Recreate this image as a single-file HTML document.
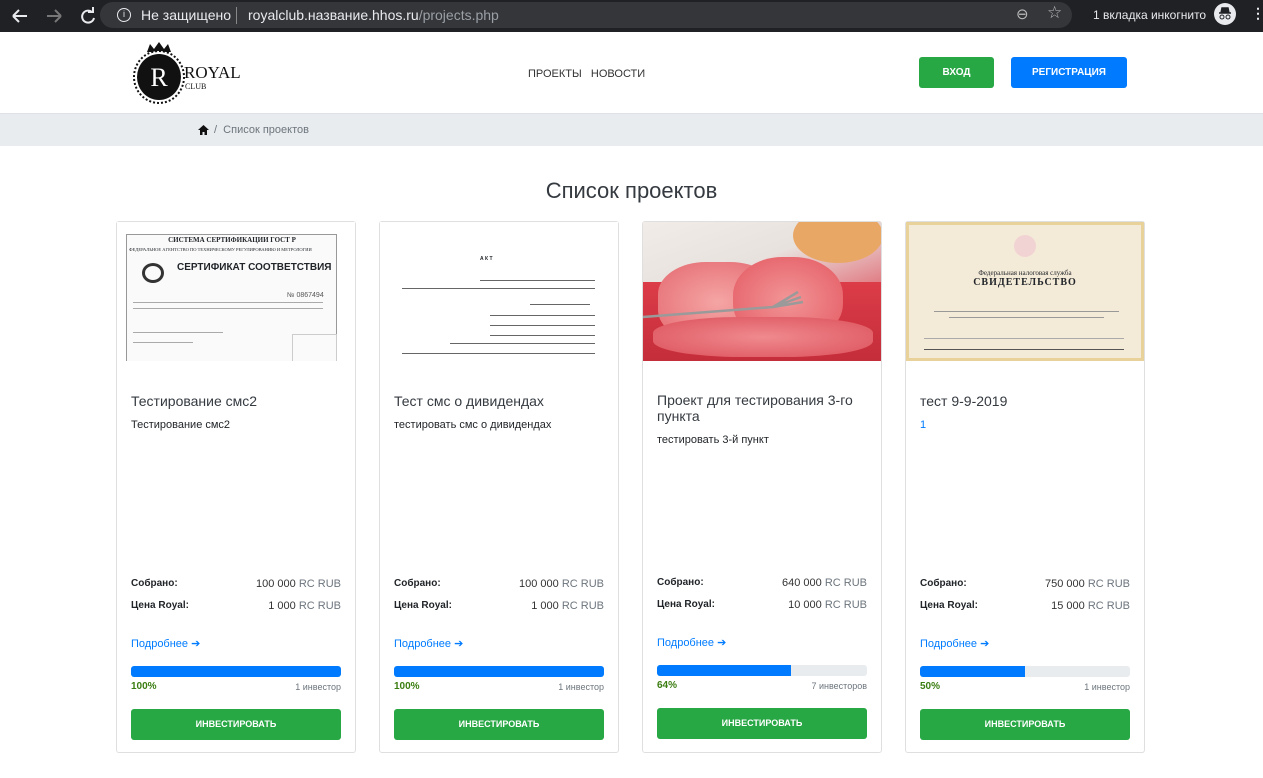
<!DOCTYPE html>
<html><head><meta charset="utf-8"><style>
*{margin:0;padding:0;box-sizing:border-box}
body{width:1263px;height:778px;overflow:hidden;background:#fff;font-family:"Liberation Sans",Arial,sans-serif;position:relative;color:#212529}
.abs{position:absolute}
#chrome{left:0;top:0;width:1263px;height:32px;background:#202124}
#omni{left:100px;top:2px;width:972px;height:26px;border-radius:13px;background:#35363a}
.ct{color:#e8eaed;font-size:14px;top:7px}
#hdr{left:0;top:32px;width:1263px;height:82px;background:#fff;border-bottom:1px solid #dee2e6}
#bc{left:0;top:114px;width:1263px;height:32px;background:#e9ecef}
.btn{color:#fff;font-size:10px;font-weight:bold;text-align:center;border-radius:3px}
.card{width:240px;height:532px;top:221px;border:1px solid #dfdfdf;border-radius:3px;background:#fff}
.card .img{position:absolute;left:0;top:0;width:238px;height:139px;overflow:hidden}
.t{position:absolute;left:14px;font-size:14px;color:#343a40;line-height:16px;width:215px}
.d{position:absolute;left:14px;font-size:11px;color:#212529}
.lab{position:absolute;left:14px;font-size:10px;font-weight:bold}
.val{position:absolute;right:14px;font-size:11px;color:#333}
.val span{color:#6c757d}
.more{position:absolute;left:14px;font-size:11px;color:#007bff}
.bar{position:absolute;left:14px;width:210px;height:11px;border-radius:3px;background:#e9ecef;overflow:hidden}
.bar i{display:block;height:100%;background:#007bff}
.pct{position:absolute;left:14px;font-size:10px;font-weight:bold;color:#3a7d10}
.inv{position:absolute;right:14px;font-size:9px;color:#6c757d}
.ib{position:absolute;left:14px;width:210px;height:31px;border-radius:3px;background:#28a745;color:#fff;font-size:9px;font-weight:bold;text-align:center;line-height:31px}
.line{position:absolute;height:1px;background:#666}
</style></head><body>
<div id="chrome" class="abs"></div>
<svg class="abs" style="left:10px;top:6px" width="90" height="20"><g stroke="#e8eaed" stroke-width="2" fill="none"><path d="M3 10 H17 M3 10 L9 4 M3 10 L9 16"/><path d="M51 10 H37 M51 10 L45 4 M51 10 L45 16" stroke="#777"/><path d="M82 6 A6 6 0 1 0 84 12"/><path d="M78 6 H83 V1" /></g></svg>
<div id="omni" class="abs"></div>
<div class="abs" style="left:117px;top:8px;width:14px;height:14px;border:1.5px solid #e8eaed;border-radius:50%;color:#e8eaed;font-size:9px;text-align:center;line-height:11px">i</div>
<div class="abs ct" style="left:141px">Не защищено</div>
<div class="abs" style="left:236px;top:7px;width:1px;height:17px;background:#888"></div>
<div class="abs ct" style="left:248px">royalclub.название.hhos.ru<span style="color:#9aa0a6">/projects.php</span></div>
<div class="abs ct" style="left:1016px;top:5px;font-size:15px;color:#bbb">⊖</div>
<div class="abs ct" style="left:1047px;top:3px;font-size:17px;color:#bbb">☆</div>
<div class="abs ct" style="left:1093px;top:8px;font-size:12px">1 вкладка инкогнито</div>
<svg class="abs" style="left:1214px;top:3px" width="22" height="22"><circle cx="11" cy="11" r="11" fill="#e8eaed"/><path d="M5 10 H17 M7 10 L8 5 H14 L15 10" stroke="#202124" stroke-width="1.5" fill="#202124"/><circle cx="8" cy="14" r="2" stroke="#202124" fill="none"/><circle cx="14" cy="14" r="2" stroke="#202124" fill="none"/></svg>
<div class="abs ct" style="left:1251px;top:5px;font-size:14px;font-weight:bold">⋮</div>

<div id="hdr" class="abs"></div>
<svg class="abs" style="left:130px;top:40px" width="120" height="66">
<path d="M17 12 L20 4 L24 9 L29 2 L34 9 L38 4 L41 12 Z" fill="#111"/>
<ellipse cx="29" cy="37" rx="25" ry="26" fill="#fff" stroke="#111" stroke-width="2" stroke-dasharray="2 2"/>
<ellipse cx="29" cy="37" rx="22" ry="23" fill="#111"/>
<text x="29" y="46" font-family="Liberation Serif" font-size="26" fill="#fff" text-anchor="middle">R</text>
<text x="54" y="38" font-family="Liberation Serif" font-size="17" fill="#111">ROYAL</text>
<text x="55" y="49" font-family="Liberation Serif" font-size="8" fill="#111">CLUB</text>
</svg>
<div class="abs" style="left:528px;top:68px;font-size:11px;color:#333">ПРОЕКТЫ &nbsp;&nbsp;НОВОСТИ</div>
<div class="abs btn" style="left:919px;top:57px;width:75px;height:31px;line-height:32px;background:#28a745">ВХОД</div>
<div class="abs btn" style="left:1011px;top:57px;width:116px;height:31px;line-height:32px;background:#007bff">РЕГИСТРАЦИЯ</div>

<div id="bc" class="abs"></div>
<svg class="abs" style="left:198px;top:125px" width="11" height="10"><path d="M5.5 0 L11 5 H9 V10 H6.5 V7 H4.5 V10 H2 V5 H0 Z" fill="#111"/></svg>
<div class="abs" style="left:214px;top:124px;font-size:11px;color:#6c757d">/&nbsp; Список проектов</div>

<div class="abs" style="left:0;width:1263px;top:178px;text-align:center;font-size:22px;color:#343a40">Список проектов</div>

<!-- card 1 -->
<div class="abs card" style="left:116px">
 <div class="img" style="background:#fff">
  <div class="abs" style="left:9px;top:12px;width:211px;height:140px;background:#fafafa;border:1px solid #999"></div>
  <div class="abs" style="left:0;width:230px;text-align:center;top:14px;font-size:7px;font-family:'Liberation Serif';font-weight:bold">СИСТЕМА СЕРТИФИКАЦИИ ГОСТ Р</div>
  <div class="abs" style="left:12px;top:25px;width:210px;font-size:4.5px;font-family:'Liberation Serif';white-space:nowrap">ФЕДЕРАЛЬНОЕ АГЕНТСТВО ПО ТЕХНИЧЕСКОМУ РЕГУЛИРОВАНИЮ И МЕТРОЛОГИИ</div>
  <div class="abs" style="left:25px;top:41px;width:22px;height:20px;border-radius:50%;border:3px solid #333"></div>
  <div class="abs" style="left:60px;top:40px;font-size:10px;font-weight:bold">СЕРТИФИКАТ СООТВЕТСТВИЯ</div>
  <div class="abs" style="left:170px;top:70px;font-size:7px;color:#555">№ 0867494</div>
  <div class="line" style="left:16px;top:80px;width:190px;background:#aaa"></div>
  <div class="line" style="left:16px;top:86px;width:190px;background:#aaa"></div>
  <div class="line" style="left:16px;top:110px;width:90px;background:#aaa"></div>
  <div class="line" style="left:16px;top:120px;width:60px;background:#aaa"></div>
  <div class="abs" style="left:175px;top:112px;width:45px;height:30px;border:1px solid #ccc"></div>
 </div>
 <div class="t" style="top:171px">Тестирование смс2</div>
 <div class="d" style="top:197px">Тестирование смс2</div>
 <div class="lab" style="top:356px">Собрано:</div><div class="val" style="top:356px">100 000 <span>RC RUB</span></div>
 <div class="lab" style="top:378px">Цена Royal:</div><div class="val" style="top:378px">1 000 <span>RC RUB</span></div>
 <div class="more" style="top:415px">Подробнее ➔</div>
 <div class="bar" style="top:444px"><i style="width:100%"></i></div>
 <div class="pct" style="top:459px">100%</div><div class="inv" style="top:460px">1 инвестор</div>
 <div class="ib" style="top:487px">ИНВЕСТИРОВАТЬ</div>
</div>

<!-- card 2 -->
<div class="abs card" style="left:379px">
 <div class="img" style="background:#fff">
  <div class="abs" style="left:100px;top:34px;font-size:5px;font-weight:bold">А К Т</div>
  <div class="line" style="left:100px;top:58px;width:115px"></div>
  <div class="line" style="left:22px;top:66px;width:193px"></div>
  <div class="line" style="left:150px;top:82px;width:60px"></div>
  <div class="line" style="left:110px;top:93px;width:105px"></div>
  <div class="line" style="left:110px;top:103px;width:105px"></div>
  <div class="line" style="left:110px;top:113px;width:105px"></div>
  <div class="line" style="left:70px;top:121px;width:145px"></div>
  <div class="line" style="left:22px;top:131px;width:193px"></div>
 </div>
 <div class="t" style="top:171px">Тест смс о дивидендах</div>
 <div class="d" style="top:197px">тестировать смс о дивидендах</div>
 <div class="lab" style="top:356px">Собрано:</div><div class="val" style="top:356px">100 000 <span>RC RUB</span></div>
 <div class="lab" style="top:378px">Цена Royal:</div><div class="val" style="top:378px">1 000 <span>RC RUB</span></div>
 <div class="more" style="top:415px">Подробнее ➔</div>
 <div class="bar" style="top:444px"><i style="width:100%"></i></div>
 <div class="pct" style="top:459px">100%</div><div class="inv" style="top:460px">1 инвестор</div>
 <div class="ib" style="top:487px">ИНВЕСТИРОВАТЬ</div>
</div>

<!-- card 3 -->
<div class="abs card" style="left:642px">
 <div class="img" style="background:linear-gradient(160deg,#f1ece8 0%,#e8e2de 35%,#e4a0a4 55%,#d94a55 80%,#c83a44 100%)">
  <div class="abs" style="left:150px;top:-14px;width:90px;height:55px;border-radius:50%;background:#e9a766"></div>
  <div class="abs" style="left:0;top:60px;width:238px;height:79px;background:linear-gradient(#dc3c48,#c42d3a)"></div>
  <div class="abs" style="left:15px;top:40px;width:120px;height:80px;border-radius:40%;background:radial-gradient(#f5a5a5,#e46a70)"></div>
  <div class="abs" style="left:90px;top:35px;width:110px;height:85px;border-radius:45%;background:radial-gradient(#f29596,#e35962)"></div>
  <div class="abs" style="left:10px;top:95px;width:220px;height:40px;border-radius:40%;background:radial-gradient(#ef8a8e,#dd525c)"></div>
  <svg class="abs" style="left:0;top:60px" width="180" height="50"><path d="M0 35 L130 25 L155 10 M130 25 L158 15 M130 25 L160 20" stroke="#9a9a9a" stroke-width="2.5" fill="none"/></svg>
 </div>
 <div class="t" style="top:170px">Проект для тестирования 3-го пункта</div>
 <div class="d" style="top:212px">тестировать 3-й пункт</div>
 <div class="lab" style="top:355px">Собрано:</div><div class="val" style="top:355px">640 000 <span>RC RUB</span></div>
 <div class="lab" style="top:377px">Цена Royal:</div><div class="val" style="top:377px">10 000 <span>RC RUB</span></div>
 <div class="more" style="top:414px">Подробнее ➔</div>
 <div class="bar" style="top:443px"><i style="width:64%"></i></div>
 <div class="pct" style="top:458px">64%</div><div class="inv" style="top:459px">7 инвесторов</div>
 <div class="ib" style="top:486px">ИНВЕСТИРОВАТЬ</div>
</div>

<!-- card 4 -->
<div class="abs card" style="left:905px">
 <div class="img" style="background:#f4ead8;border:3px solid #e8d29a">
  <div class="abs" style="left:105px;top:10px;width:22px;height:22px;border-radius:50%;background:#f1d3d3"></div>
  <div class="abs" style="left:0;width:232px;top:44px;text-align:center;font-size:7px;font-family:'Liberation Serif'">Федеральная налоговая служба</div>
  <div class="abs" style="left:0;width:232px;top:52px;text-align:center;font-size:10px;font-weight:bold;font-family:'Liberation Serif';letter-spacing:1px">СВИДЕТЕЛЬСТВО</div>
  <div class="line" style="left:25px;top:86px;width:185px;background:#999"></div>
  <div class="line" style="left:40px;top:92px;width:155px;background:#999"></div>
  <div class="line" style="left:15px;top:113px;width:200px;background:#aaa"></div>
  <div class="line" style="left:15px;top:124px;width:200px;background:#555"></div>
 </div>
 <div class="t" style="top:171px">тест 9-9-2019</div>
 <div class="d" style="top:197px;color:#007bff">1</div>
 <div class="lab" style="top:356px">Собрано:</div><div class="val" style="top:356px">750 000 <span>RC RUB</span></div>
 <div class="lab" style="top:378px">Цена Royal:</div><div class="val" style="top:378px">15 000 <span>RC RUB</span></div>
 <div class="more" style="top:415px">Подробнее ➔</div>
 <div class="bar" style="top:444px"><i style="width:50%"></i></div>
 <div class="pct" style="top:459px">50%</div><div class="inv" style="top:460px">1 инвестор</div>
 <div class="ib" style="top:487px">ИНВЕСТИРОВАТЬ</div>
</div>
</body></html>
